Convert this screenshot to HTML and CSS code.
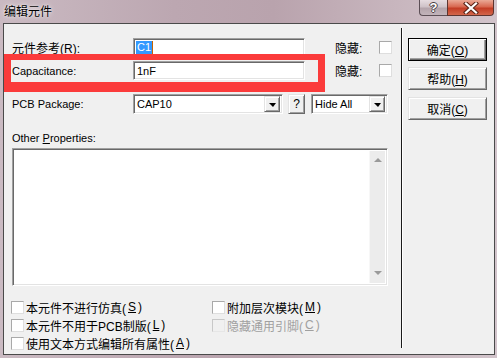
FILE: index.html
```html
<!DOCTYPE html>
<html>
<head>
    <title>编辑元件</title>
    <link rel="stylesheet" href="styles.css">
</head>
<body>
<div class="window">
    <div class="titlebar">
        <span class="title">编辑元件</span>
        <div class="caption">
            <span class="cap-help">?</span>
            <span class="cap-close">
                <svg width="16" height="12" viewBox="0 0 16 12">
                    <path d="M3 1.5L13 10.5M13 1.5L3 10.5" stroke="#5a2418" stroke-width="4.2" stroke-linecap="square"/>
                    <path d="M3 1.5L13 10.5M13 1.5L3 10.5" stroke="#fff" stroke-width="2.2" stroke-linecap="square"/>
                </svg>
            </span>
        </div>
    </div>

    <div class="client">
        <div class="main">
            <div class="row">
                <label class="lbl cn">元件参考(<u>R</u>):</label>
                <div class="field"><span class="sel">C1</span><span class="caret"></span></div>
                <span class="hide-lbl cn">隐藏:</span>
                <span class="check"></span>
            </div>
            <div class="row">
                <label class="lbl">Capacitance:</label>
                <div class="field">1nF</div>
                <span class="hide-lbl cn">隐藏:</span>
                <span class="check"></span>
            </div>
            <div class="row row-pkg">
                <label class="lbl">PCB Package:</label>
                <div class="combo combo-pkg"><span>CAP10</span><span class="drop"></span></div>
                <button class="qbtn">?</button>
                <div class="combo combo-hide"><span>Hide All</span><span class="drop"></span></div>
            </div>

            <div class="other-lbl">Other <u>P</u>roperties:</div>
            <div class="memo">
                <div class="memo-body"></div>
                <div class="vscroll">
                    <span class="arr arr-up"></span>
                    <span class="arr arr-down"></span>
                </div>
            </div>

            <div class="opts">
                <div class="opt"><span class="check"></span>本元件不进行仿真(<u>S</u>)</div>
                <div class="opt"><span class="check"></span>附加层次模块(<u>M</u>)</div>
                <div class="opt"><span class="check"></span>本元件不用于PCB制版(<u>L</u>)</div>
                <div class="opt disabled"><span class="check"></span>隐藏通用引脚(<u>C</u>)</div>
                <div class="opt"><span class="check"></span>使用文本方式编辑所有属性(<u>A</u>)</div>
            </div>
        </div>

        <div class="sep"></div>

        <div class="side">
            <button class="btn btn-default">确定(<u>O</u>)</button>
            <button class="btn btn-help">帮助(<u>H</u>)</button>
            <button class="btn btn-cancel">取消(<u>C</u>)</button>
        </div>
    </div>

    <!-- red highlight drawn over the dialog -->
    <div class="annot"></div>
</div>
</body>
</html>
```

FILE: styles.css
```css
* {
    box-sizing: border-box;
}
body {
    margin: 0;
    background: #c3b0b9;
    font-family: "Liberation Sans", "Noto Sans CJK SC", sans-serif;
    font-size: 11px;
    color: #000;
}
u {
    text-decoration: underline;
    text-underline-offset: 1px;
}
.cn {
    font-family: "Liberation Sans", "Noto Sans CJK SC", sans-serif;
    font-size: 12px;
}

/* window frame */
.window {
    position: relative;
    width: 497px;
    height: 358px;
    display: flex;
    flex-direction: column;
    overflow: hidden;
    background: linear-gradient(90deg, #cabac2 0%, #bca7b1 35%, #b9a3ad 55%, #c8b6be 80%, #d2c4cb 100%);
}
.titlebar {
    height: 23px;
    display: flex;
    justify-content: space-between;
    align-items: flex-start;
}
.title {
    font-family: "Noto Sans CJK SC", sans-serif;
    font-size: 12px;
    line-height: 16px;
    padding: 3px 0 0 4px;
    text-shadow: 0 0 5px rgba(255, 255, 255, 0.9), 0 0 2px rgba(255, 255, 255, 0.7);
}
.caption {
    display: flex;
    margin-right: 3px;
}
.cap-help {
    width: 28px;
    height: 16px;
    border: 1px solid #5c4f56;
    border-top: none;
    border-right: none;
    border-radius: 0 0 0 4px;
    background: linear-gradient(#e6dce0, #cfc2c8 45%, #b4a4ab 55%, #c2b4ba);
    color: #fff;
    font: bold 13px/15px "Liberation Sans", sans-serif;
    text-align: center;
    text-shadow: 1px 0 #4a3f45, -1px 0 #4a3f45, 0 1px #4a3f45, 0 -1px #4a3f45;
}
.cap-close {
    width: 47px;
    height: 16px;
    border: 1px solid #5e3530;
    border-top: none;
    border-radius: 0 0 4px 0;
    background: linear-gradient(#eaa996, #d86850 45%, #c33d25 55%, #d3664b);
    display: flex;
    align-items: center;
    justify-content: center;
}

/* client area */
.client {
    margin-left: 3px;
    width: 492px;
    height: 332px;
    border: 1px solid #4a4a4a;
    background: #f0f0f0;
    display: flex;
}
.main {
    width: 397px;
    padding: 14px 0 0 8px;
}
.row {
    display: flex;
    align-items: center;
    height: 19px;
}
.row + .row {
    margin-top: 4px;
}
.row.row-pkg {
    margin-top: 14px;
    height: 20px;
}
.lbl {
    width: 121px;
}

.field,
.combo,
.memo {
    background: #fff;
    border: 1px solid;
    border-color: #a0a0a0 #fff #fff #a0a0a0;
    box-shadow: inset 1px 1px #696969, inset -1px -1px #e3e3e3;
}
.field {
    width: 172px;
    height: 19px;
    padding-left: 3px;
    display: flex;
    align-items: center;
}
.sel {
    background: #3399ff;
    color: #fff;
    line-height: 13px;
    padding: 0 1px;
    margin-left: -1px;
}
.caret {
    width: 1px;
    height: 13px;
    background: #c86400;
}
.hide-lbl {
    margin-left: 30px;
    width: 44px;
}
.check {
    flex: none;
    width: 13px;
    height: 13px;
    background: #fff;
    border: 1px solid;
    border-color: #a9a9a9 #dedede #dedede #a9a9a9;
}

.combo {
    height: 20px;
    padding: 2px 2px 2px 3px;
    display: flex;
    align-items: center;
    justify-content: space-between;
}
.combo-pkg {
    width: 150px;
}
.combo-hide {
    width: 77px;
    margin-left: 6px;
}
.drop,
.qbtn,
.btn {
    background: #f0f0f0;
    border: 1px solid;
    border-color: #e3e3e3 #696969 #696969 #e3e3e3;
    box-shadow: inset 1px 1px #fff, inset -1px -1px #a0a0a0;
}
.drop {
    width: 16px;
    height: 16px;
    display: flex;
    align-items: center;
    justify-content: center;
}
.drop::after {
    content: "";
    border-left: 4px solid transparent;
    border-right: 3px solid transparent;
    border-top: 4px solid #000;
    margin-top: 1px;
}
.qbtn {
    width: 17px;
    height: 20px;
    margin-left: 5px;
    padding: 0;
    font: 12px "Liberation Sans", sans-serif;
}

.other-lbl {
    margin-top: 17px;
    height: 15px;
    line-height: 15px;
}
.memo {
    margin-top: 2px;
    width: 376px;
    height: 138px;
    padding: 2px;
    display: flex;
}
.memo-body {
    flex: 1;
}
.vscroll {
    width: 16px;
    background: #ececec;
    border-left: 1px solid #f7f7f7;
    display: flex;
    flex-direction: column;
    justify-content: space-between;
    align-items: center;
    padding: 7px 0 8px;
}
.arr {
    width: 0;
    height: 0;
    border-left: 4px solid transparent;
    border-right: 4px solid transparent;
}
.arr-up {
    border-bottom: 4px solid #9a9a9a;
}
.arr-down {
    border-top: 4px solid #9a9a9a;
}

.opts {
    margin: 12px 0 0 -1px;
    display: grid;
    grid-template-columns: 201px auto;
    grid-auto-rows: 18px;
    font-family: "Liberation Sans", "Noto Sans CJK SC", sans-serif;
    font-size: 12px;
}
.opt {
    display: flex;
    align-items: center;
    gap: 2px;
    white-space: nowrap;
}
.opt.disabled {
    color: #a0a0a0;
}
.opt.disabled .check {
    background: #f0f0f0;
    border-color: #c8c8c8 #e6e6e6 #e6e6e6 #c8c8c8;
}

/* right button column */
.sep {
    width: 2px;
    height: 320px;
    margin-top: 4px;
    border-left: 1px solid #1a1a1a;
    border-right: 1px solid #fff;
}
.side {
    padding: 14px 0 0 5px;
    display: flex;
    flex-direction: column;
}
.btn {
    width: 79px;
    height: 23px;
    padding: 0;
    font-family: "Liberation Sans", "Noto Sans CJK SC", sans-serif;
    font-size: 12px;
    color: #000;
}
.btn-default {
    border: 1px solid #000;
    box-shadow: inset 1px 1px #fff, inset -1px -1px #696969, inset -2px -2px #a0a0a0;
}
.btn-help {
    margin-top: 6px;
}
.btn-cancel {
    margin-top: 7px;
}

.annot {
    position: absolute;
    left: 4px;
    top: 54px;
    width: 321px;
    height: 38px;
    border: 7px solid #fb3b3b;
    border-top-width: 6px;
    border-bottom-width: 10px;
}
```
